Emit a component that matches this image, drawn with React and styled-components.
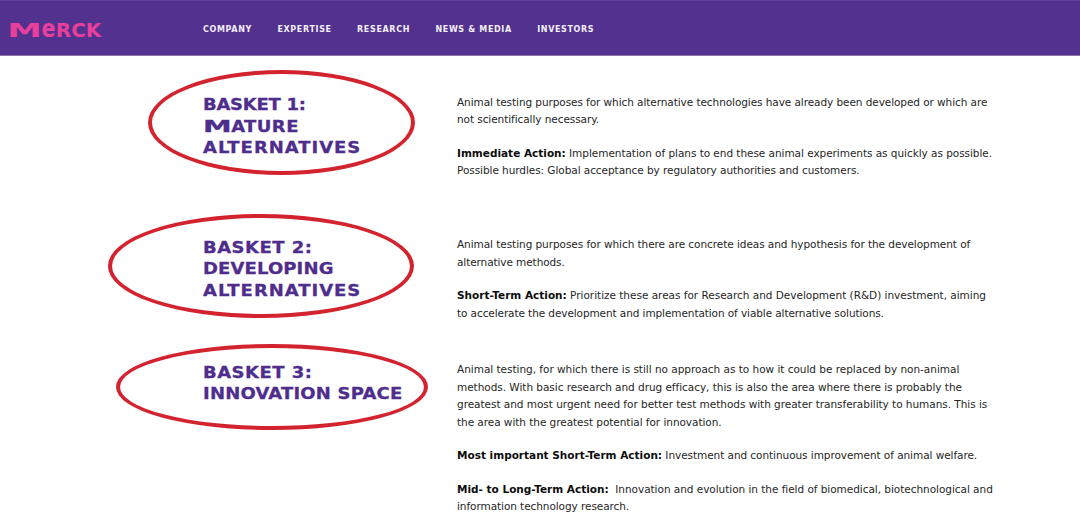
import React from "react";
import styled, {createGlobalStyle} from "styled-components";

const GlobalStyle = createGlobalStyle`
	body {
		margin: 0;
		background: #ffffff;
		overflow: hidden;
	}
`;

const Page = styled.div`
	width: 1080px;
	height: 513px;
	overflow: hidden;
	font-family: Verdana, "DejaVu Sans", sans-serif;
`;

const Header = styled.header`
	display: flex;
	align-items: center;
	box-sizing: border-box;
	height: 56px;
	padding: 3px 0 0 4px;
	background: #52318f;
	border-top: 1px solid #5f409b;
	border-bottom: 1px solid #8c76b4;
`;

const LogoLink = styled.a`
	display: flex;
	width: 199px;
`;

const LogoText = styled.text`
	font-family: "DejaVu Sans", sans-serif;
	font-weight: bold;
	fill: #e83e9c;
`;

const Nav = styled.nav`
	display: flex;
	gap: 25.4px;
`;

const NavLink = styled.a`
	color: #f4effa;
	font-size: 8px;
	font-weight: bold;
	line-height: 12px;
	letter-spacing: 0.65px;
	white-space: nowrap;
`;

const Content = styled.main`
	padding: 37.6px 0 0 203px;
`;

const Section = styled.section`
	display: grid;
	grid-template-columns: 254px 560px;
	margin-bottom: ${props => props.$gap}px;
`;

const Title = styled.h2`
	position: relative;
	margin: 0;
	padding-top: 0.4px;
	color: #4f2d8c;
	font-size: 16.5px;
	font-weight: bold;
	line-height: 21.6px;
`;

const TitleLine = styled.span`
	display: block;
	width: max-content;
	letter-spacing: ${props => props.$spacing}px;
	transform: scaleX(1.09);
	transform-origin: left center;
	-webkit-text-stroke: 0.3px #4f2d8c;
`;

const WideLetter = styled.span`
	display: inline-block;
	margin-right: 9px;
	transform: scaleX(1.6);
	transform-origin: left center;
`;

// hand-marked ring lying over the section title
const Ring = styled.span`
	position: absolute;
	box-sizing: border-box;
	left: ${props => props.$left}px;
	top: ${props => props.$top}px;
	width: ${props => props.$width}px;
	height: ${props => props.$height}px;
	border: 4px solid #d3232f;
	border-radius: 50%;
`;

const Copy = styled.div`
	display: flex;
	flex-direction: column;
	gap: 16.2px;
`;

const Paragraph = styled.p`
	margin: 0;
	color: #262626;
	font-size: 10.5px;
	line-height: 17.4px;
`;

const Line = styled.span`
	display: block;
	width: max-content;
	white-space: pre;
	letter-spacing: ${props => props.$spacing || 0}px;
`;

const Strong = styled.strong`
	color: #0c0c0c;
	letter-spacing: 0;
`;

const links = ["COMPANY", "EXPERTISE", "RESEARCH", "NEWS & MEDIA", "INVESTORS"];

const sections = [
	{
		gap: 56.8,
		ring: {left: -55, top: -23.6, width: 267, height: 105},
		title: [
			{text: "BASKET 1:", spacing: -0.25},
			{wide: "M", text: "ATURE", spacing: 0.4},
			{text: "ALTERNATIVES", spacing: 0.9},
		],
		copy: [
			[
				{text: "Animal testing purposes for which alternative technologies have already been developed or which are", spacing: -0.073},
				{text: "not scientifically necessary.", spacing: -0.07},
			],
			[
				{strong: "Immediate Action:", text: " Implementation of plans to end these animal experiments as quickly as possible.", spacing: -0.045},
				{text: "Possible hurdles: Global acceptance by regulatory authorities and customers.", spacing: -0.06},
			],
		],
	},
	{
		gap: 39.4,
		ring: {left: -95, top: -22, width: 305.5, height: 104},
		title: [
			{text: "BASKET 2:", spacing: 0.45},
			{text: "DEVELOPING", spacing: 0.12},
			{text: "ALTERNATIVES", spacing: 0.9},
		],
		copy: [
			[
				{text: "Animal testing purposes for which there are concrete ideas and hypothesis for the development of", spacing: -0.06},
				{text: "alternative methods.", spacing: -0.09},
			],
			[
				{strong: "Short-Term Action:", text: " Prioritize these areas for Research and Development (R&D) investment, aiming", spacing: -0.02},
				{text: "to accelerate the development and implementation of viable alternative solutions.", spacing: -0.09},
			],
		],
	},
	{
		gap: 0,
		ring: {left: -87, top: -17, width: 312, height: 86},
		title: [
			{text: "BASKET 3:", spacing: 0.45},
			{text: "INNOVATION SPACE", spacing: 0.18},
		],
		copy: [
			[
				{text: "Animal testing, for which there is still no approach as to how it could be replaced by non-animal", spacing: -0.025},
				{text: "methods. With basic research and drug efficacy, this is also the area where there is probably the", spacing: -0.04},
				{text: "greatest and most urgent need for better test methods with greater transferability to humans. This is", spacing: -0.035},
				{text: "the area with the greatest potential for innovation.", spacing: -0.05},
			],
			[
				{strong: "Most important Short-Term Action:", text: " Investment and continuous improvement of animal welfare.", spacing: -0.06},
			],
			[
				{strong: "Mid- to Long-Term Action:", text: "  Innovation and evolution in the field of biomedical, biotechnological and", spacing: -0.04},
				{text: "information technology research.", spacing: -0.07},
			],
		],
	},
];

function Logo() {
	return (
		<svg width="104" height="32" viewBox="0 0 104 32" role="img" aria-label="Merck">
			<LogoText transform="translate(3.2 23.2) scale(1.78 1)" fontSize="19.5">M</LogoText>
			<LogoText x="37.6" y="23.2" fontSize="24" textLength="14" lengthAdjust="spacingAndGlyphs">e</LogoText>
			<LogoText x="51.8" y="23.2" fontSize="19.5" textLength="45.5" lengthAdjust="spacingAndGlyphs">RCK</LogoText>
		</svg>
	);
}

function Basket({title, ring, copy, gap}) {
	return (
		<Section $gap={gap}>
			<Title>
				{title.map(line => (
					<TitleLine key={line.text} $spacing={line.spacing}>
						{line.wide && <WideLetter>{line.wide}</WideLetter>}
						{line.text}
					</TitleLine>
				))}
				<Ring $left={ring.left} $top={ring.top} $width={ring.width} $height={ring.height} />
			</Title>
			<Copy>
				{copy.map((lines, idx) => (
					<Paragraph key={idx}>
						{lines.map(line => (
							<Line key={line.text} $spacing={line.spacing}>
								{line.strong && <Strong>{line.strong}</Strong>}
								{line.text}
							</Line>
						))}
					</Paragraph>
				))}
			</Copy>
		</Section>
	);
}

function App() {
	return (
		<Page>
			<GlobalStyle />
			<Header>
				<LogoLink>
					<Logo />
				</LogoLink>
				<Nav>
					{links.map(link => (
						<NavLink key={link}>{link}</NavLink>
					))}
				</Nav>
			</Header>
			<Content>
				{sections.map((section, idx) => (
					<Basket key={idx} {...section} />
				))}
			</Content>
		</Page>
	);
}

export default App;
